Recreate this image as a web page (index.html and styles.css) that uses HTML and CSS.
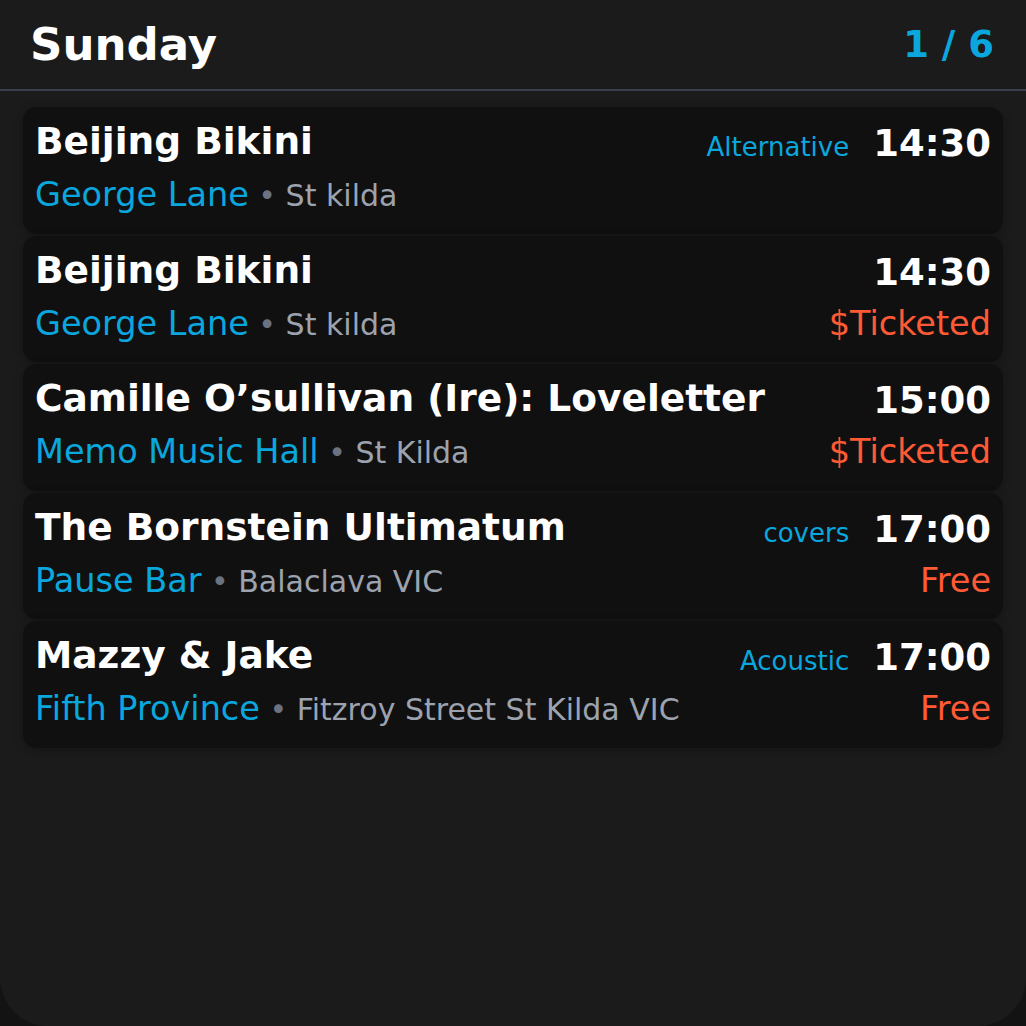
FILE: index.html
```html
<!DOCTYPE html>
<html lang="en">
<head>
<meta charset="utf-8">
<title>Sunday</title>
<link rel="stylesheet" href="styles.css">
</head>
<body>
<div class="frame">
  <header class="header">
    <h1 class="day">Sunday</h1>
    <div class="pager">1 / 6</div>
  </header>
  <main class="list">
    <article class="card">
      <div class="row top">
        <div class="title">Beijing Bikini</div>
        <div class="meta"><span class="genre">Alternative</span><span class="time">14:30</span></div>
      </div>
      <div class="row bottom">
        <div class="where"><span class="venue">George Lane</span><span class="loc"><span class="dot"> • </span>St kilda</span></div>
      </div>
    </article>
    <article class="card">
      <div class="row top">
        <div class="title">Beijing Bikini</div>
        <div class="meta"><span class="time">14:30</span></div>
      </div>
      <div class="row bottom">
        <div class="where"><span class="venue">George Lane</span><span class="loc"><span class="dot"> • </span>St kilda</span></div>
        <div class="price">$Ticketed</div>
      </div>
    </article>
    <article class="card">
      <div class="row top">
        <div class="title">Camille O’sullivan (Ire): Loveletter</div>
        <div class="meta"><span class="time">15:00</span></div>
      </div>
      <div class="row bottom">
        <div class="where"><span class="venue">Memo Music Hall</span><span class="loc"><span class="dot"> • </span>St Kilda</span></div>
        <div class="price">$Ticketed</div>
      </div>
    </article>
    <article class="card">
      <div class="row top">
        <div class="title">The Bornstein Ultimatum</div>
        <div class="meta"><span class="genre">covers</span><span class="time">17:00</span></div>
      </div>
      <div class="row bottom">
        <div class="where"><span class="venue">Pause Bar</span><span class="loc"><span class="dot"> • </span>Balaclava VIC</span></div>
        <div class="price">Free</div>
      </div>
    </article>
    <article class="card">
      <div class="row top">
        <div class="title">Mazzy &amp; Jake</div>
        <div class="meta"><span class="genre">Acoustic</span><span class="time">17:00</span></div>
      </div>
      <div class="row bottom">
        <div class="where"><span class="venue">Fifth Province</span><span class="loc"><span class="dot"> • </span>Fitzroy Street St Kilda VIC</span></div>
        <div class="price">Free</div>
      </div>
    </article>
  </main>
</div>
</body>
</html>
```

FILE: styles.css
```css
html, body {
  margin: 0;
  padding: 0;
  background: #131313;
}
body {
  font-family: "DejaVu Sans", "Liberation Sans", sans-serif;
  color: #ffffff;
}
.frame {
  width: 1026px;
  height: 1026px;
  background: #1b1b1b;
  border-radius: 0 0 48px 48px;
  overflow: hidden;
}
.header {
  height: 89px;
  display: flex;
  align-items: center;
  justify-content: space-between;
  padding: 0 32px 0 30px;
  border-bottom: 2px solid #383e4a;
}
.day {
  margin: 0;
  font-size: 45px;
  font-weight: 700;
  color: #ffffff;
}
.pager {
  font-size: 37px;
  font-weight: 700;
  color: #0aa7de;
}
.list {
  display: flex;
  flex-direction: column;
  gap: 2px;
  padding: 16px 23px;
}
.card {
  background: #101010;
  border-radius: 14px;
  padding: 12px 12px 18.5px;
  box-shadow: 0 2px 10px rgba(0, 0, 0, 0.25);
  display: flex;
  flex-direction: column;
  gap: 12px;
}
.row {
  display: flex;
  justify-content: space-between;
}
.row.top {
  align-items: flex-start;
  height: 44px;
}
.row.bottom {
  align-items: baseline;
  height: 40px;
}
.title {
  font-size: 37.5px;
  font-weight: 700;
  line-height: 44px;
  white-space: nowrap;
}
.meta {
  display: flex;
  align-items: baseline;
  gap: 24px;
  margin-top: 3px;
}
.genre {
  font-size: 26px;
  color: #0aa7de;
}
.time {
  font-size: 37px;
  font-weight: 700;
  line-height: 44px;
}
.where {
  white-space: nowrap;
  line-height: 40px;
}
.venue {
  font-size: 33.5px;
  color: #0aa7de;
}
.loc {
  font-size: 30px;
  color: #9ca3af;
  white-space: pre;
}
.dot {
  color: #6b7280;
}
.price {
  font-size: 33.5px;
  color: #ff5a36;
  line-height: 40px;
}
```
